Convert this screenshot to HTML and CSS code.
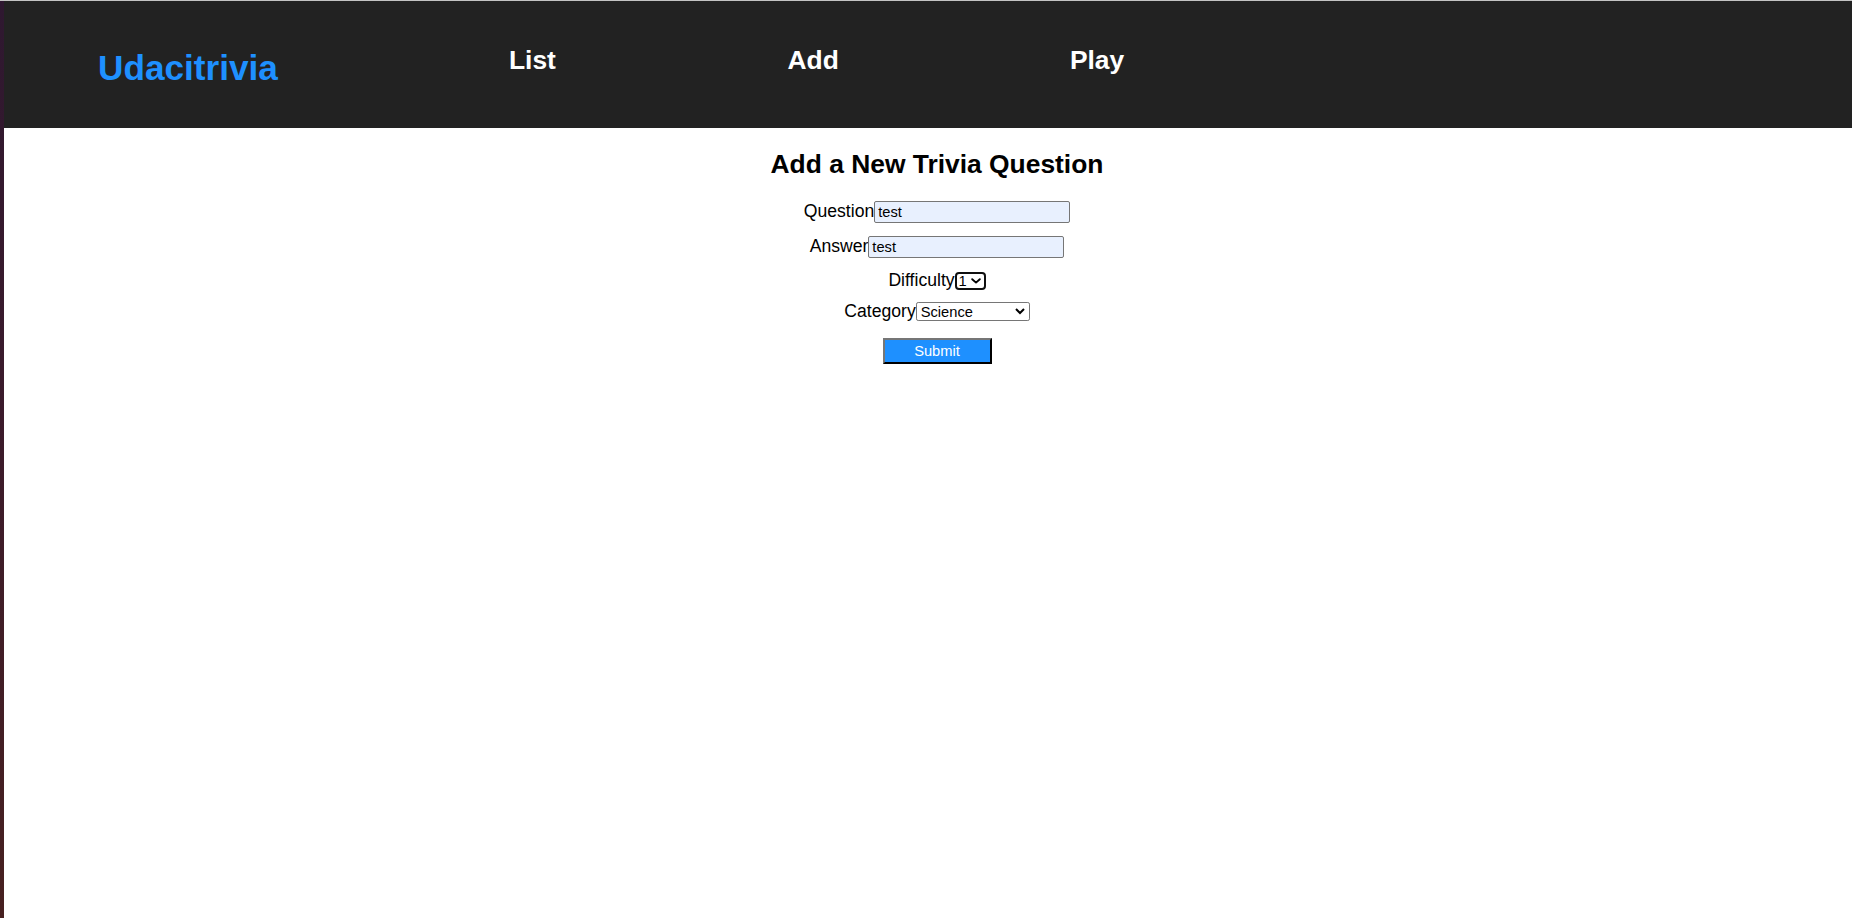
FILE: index.html
```html
<!DOCTYPE html>
<html lang="en">
<head>
<meta charset="utf-8">
<title>Udacitrivia</title>
<link rel="stylesheet" href="styles.css">
</head>
<body>
<div class="topline"></div>
<div class="screen">
  <div class="desk"></div>
  <div class="window">
    <header class="header">
      <h1 class="logo">Udacitrivia</h1>
      <nav class="nav">
        <h2 class="nav-item nav-list">List</h2>
        <h2 class="nav-item nav-add">Add</h2>
        <h2 class="nav-item nav-play">Play</h2>
      </nav>
    </header>
    <main class="main">
      <h2 class="title">Add a New Trivia Question</h2>
      <form class="form">
        <div class="row row-q"><label class="label">Question</label><input class="text-input" type="text" value="test"></div>
        <div class="row row-a"><label class="label">Answer</label><input class="text-input" type="text" value="test"></div>
        <div class="row row-d"><label class="label">Difficulty</label><span class="select-wrap"><select class="select-diff"><option>1</option><option>2</option><option>3</option><option>4</option><option>5</option></select><svg class="chevron" width="10" height="6" viewBox="0 0 10 6"><polyline points="1.2,1.2 5,4.6 8.8,1.2" fill="none" stroke="#000" stroke-width="1.9" stroke-linecap="round" stroke-linejoin="round"/></svg></span></div>
        <div class="row row-c"><label class="label">Category</label><select class="select select-cat"><option>Science</option><option>Art</option><option>Geography</option><option>History</option><option>Entertainment</option><option>Sports</option></select></div>
        <div class="row row-b"><button class="submit" type="button">Submit</button></div>
      </form>
    </main>
  </div>
</div>
</body>
</html>
```

FILE: styles.css
```css
html, body {
  margin: 0;
  padding: 0;
  height: 100%;
}

body {
  font-family: "Liberation Sans", Arial, sans-serif;
  background: #ffffff;
  color: #000000;
  overflow: hidden;
}

.topline {
  height: 1px;
  background: #c4c4c4;
}

.screen {
  display: flex;
  height: calc(100% - 1px);
}

.desk {
  width: 4px;
  flex: none;
  background: linear-gradient(#2e1830, #3a1a2c 40%, #472020);
}

.window {
  flex: 1;
  display: flex;
  flex-direction: column;
  background: #ffffff;
}

.header {
  height: 127px;
  flex: none;
  background: #222222;
  display: flex;
  align-items: flex-start;
  padding-left: 94px;
}

.logo {
  margin: 47px 231px 0 0;
  font-size: 35.2px;
  line-height: 40px;
  font-weight: bold;
  color: #1e90ff;
}

.nav {
  display: flex;
  align-items: flex-start;
}

.nav-item {
  margin: 44px 0 0 0;
  font-size: 26.4px;
  line-height: 30px;
  font-weight: bold;
  color: #ffffff;
}

.nav-list { width: 278.6px; }
.nav-add { width: 282.4px; }

.main {
  padding-left: 18px;
  text-align: center;
}

.title {
  margin: 21px 0 22px 0;
  font-size: 26.4px;
  line-height: 30px;
  font-weight: bold;
}

.form {
  display: flex;
  flex-direction: column;
}

.row {
  display: flex;
  justify-content: center;
  align-items: baseline;
}

.row-q { height: 35px; }
.row-a { height: 34px; }
.row-d { height: 31px; }
.row-c { height: 36px; }

.label {
  font-size: 17.6px;
  line-height: 20px;
}

.text-input {
  box-sizing: border-box;
  width: 196px;
  height: 22px;
  margin: 0;
  padding: 1px 3px;
  border: 1px solid #767676;
  border-radius: 2px;
  background: #e8f0fe;
  font-family: "Liberation Sans", Arial, sans-serif;
  font-size: 14.67px;
  color: #000000;
}

.select-wrap {
  position: relative;
  display: inline-block;
}

.select-diff {
  -webkit-appearance: none;
  appearance: none;
  box-sizing: border-box;
  display: block;
  width: 31px;
  height: 18px;
  margin: 0;
  padding: 0 0 0 2px;
  border: 2px solid #101010;
  border-radius: 4px;
  background: #ffffff;
  font-family: "Liberation Sans", Arial, sans-serif;
  font-size: 14.67px;
  line-height: 14px;
  color: #000000;
}

.chevron {
  position: absolute;
  left: 16px;
  top: 6px;
  pointer-events: none;
}

.select {
  zoom: 1.1;
  box-sizing: border-box;
  margin: 0;
  font-family: "Liberation Sans", Arial, sans-serif;
  font-size: 13.33px;
  color: #000000;
  background-color: #ffffff;
}

.select-cat {
  width: 103.6px;
  height: 17.3px;
  border: 1px solid #767676;
  border-radius: 2px;
  padding: 0;
}

.submit {
  box-sizing: border-box;
  width: 109px;
  height: 26px;
  margin: 1px 0 0 0;
  padding: 0;
  background: #1e90ff;
  color: #ffffff;
  border: 2px outset #767676;
  border-color: #767676 #222222 #222222 #767676;
  font-family: "Liberation Sans", Arial, sans-serif;
  font-size: 14.67px;
}
```
